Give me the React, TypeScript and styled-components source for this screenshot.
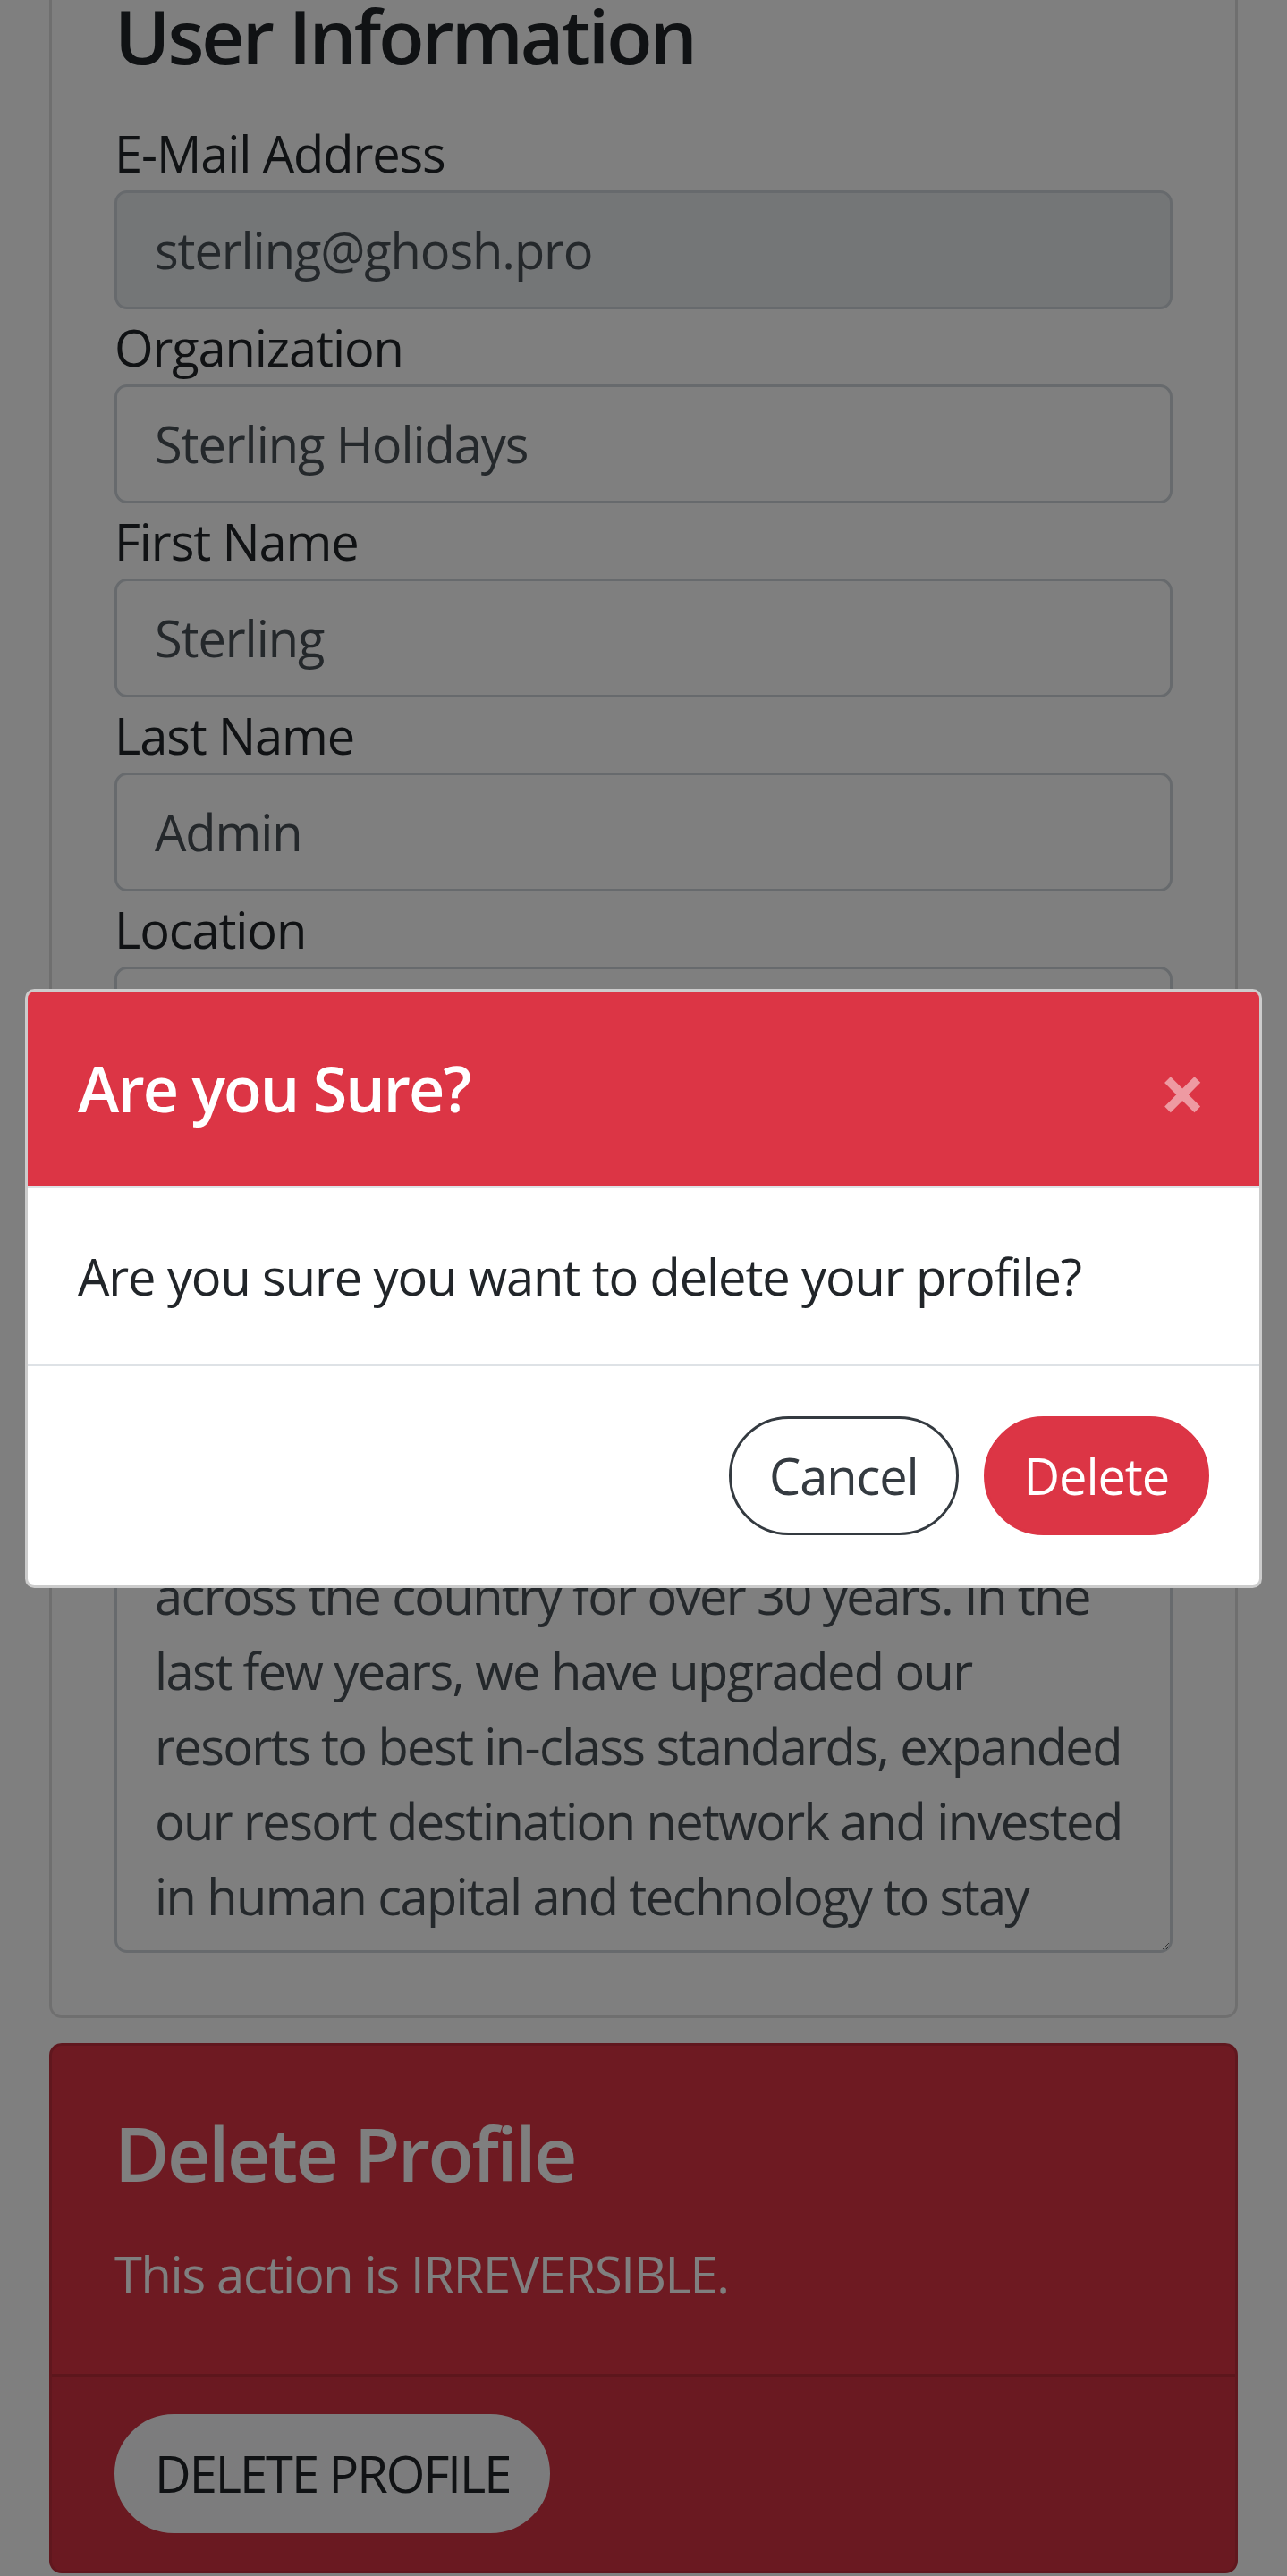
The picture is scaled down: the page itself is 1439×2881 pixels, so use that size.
import React from "react";
import styled, { createGlobalStyle } from "styled-components";

const GlobalStyle = createGlobalStyle`
  html, body {
    margin: 0;
    padding: 0;
    background: #fff;
  }
  body {
    font-family: "Open Sans", "Noto Sans", sans-serif;
    font-size: 56px;
    line-height: 84px;
    color: #212529;
    letter-spacing: -1.1px;
  }
  * {
    box-sizing: border-box;
  }
`;

const Page = styled.div`
  padding: 0 55px;
`;

const InfoCard = styled.section`
  border: 3.5px solid rgba(0, 0, 0, 0.125);
  border-top: none;
  border-radius: 0 0 14px 14px;
  padding: 0 70px 70px;
`;

const Heading = styled.h4`
  margin: -10px 0 38px;
  font-size: 84px;
  line-height: 1.2;
  font-weight: 600;
  letter-spacing: -3px;
`;

const Field = styled.div`
  display: flex;
  flex-direction: column;
`;

const Label = styled.label`
  font-size: 56px;
  line-height: 84px;
`;

const Input = styled.input<{ $disabled?: boolean }>`
  height: 133px;
  width: 100%;
  padding: 0 42px;
  border: 3.5px solid #ced4da;
  border-radius: 14px;
  font-family: inherit;
  letter-spacing: inherit;
  font-size: 56px;
  color: #495057;
  background: ${({ $disabled }) => ($disabled ? "#e9ecef" : "#fff")};
  outline: none;
`;

const TextArea = styled.textarea`
  width: 100%;
  height: 886px;
  padding: 21px 42px;
  border: 3.5px solid #ced4da;
  border-radius: 14px;
  font-family: inherit;
  letter-spacing: -1.6px;
  font-size: 56px;
  line-height: 84px;
  color: #495057;
  white-space: pre;
  overflow: hidden;
  resize: vertical;
  outline: none;
  display: block;
`;

const DangerCard = styled.section`
  margin-top: 28px;
  background: #dc3545;
  color: #fff;
  border: 3.5px solid rgba(0, 0, 0, 0.125);
  border-radius: 14px;
  overflow: hidden;
`;

const DangerBody = styled.div`
  padding: 70px;
`;

const DangerTitle = styled.h4`
  margin: 0 0 42px;
  font-size: 84px;
  line-height: 1.2;
  font-weight: 600;
  letter-spacing: -2.5px;
`;

const DangerText = styled.p`
  margin: 0;
  font-size: 56px;
  line-height: 84px;
  letter-spacing: -1.3px;
`;

const DangerFooter = styled.div`
  padding: 42px 70px;
  border-top: 3.5px solid rgba(0, 0, 0, 0.125);
  background: rgba(0, 0, 0, 0.03);
`;

const PillButton = styled.button<{ $variant: "light" | "outline" | "danger" }>`
  height: 133px;
  padding: 0 42px;
  border-radius: 400px;
  font-family: inherit;
  letter-spacing: ${({ $variant }) => ($variant === "light" ? "-2px" : "inherit")};
  font-size: 56px;
  line-height: 84px;
  cursor: pointer;
  border: 3.5px solid
    ${({ $variant }) =>
      $variant === "light" ? "#f8f9fa" : $variant === "outline" ? "#343a40" : "#dc3545"};
  background: ${({ $variant }) =>
    $variant === "light" ? "#f8f9fa" : $variant === "outline" ? "#fff" : "#dc3545"};
  color: ${({ $variant }) =>
    $variant === "light" ? "#212529" : $variant === "outline" ? "#343a40" : "#fff"};
`;

const Backdrop = styled.div`
  position: fixed;
  inset: 0;
  background: rgba(0, 0, 0, 0.5);
  z-index: 10;
`;

const ModalWrap = styled.div`
  position: fixed;
  inset: 0;
  z-index: 20;
  display: flex;
  align-items: center;
  padding: 0 28px;
`;

const ModalContent = styled.div`
  width: 100%;
  background: #fff;
  border: 3.5px solid rgba(0, 0, 0, 0.2);
  border-radius: 10.5px;
  overflow: hidden;
`;

const ModalHeader = styled.div`
  display: flex;
  align-items: center;
  justify-content: space-between;
  padding: 56px;
  background: #dc3545;
  border-bottom: 3.5px solid #dee2e6;
`;

const ModalTitle = styled.h5`
  margin: 0;
  font-size: 70px;
  line-height: 105px;
  font-weight: 600;
  letter-spacing: -1.9px;
  color: #fff;
`;

const CloseButton = styled.button`
  margin: 0 -6px 0 auto;
  padding: 8px 10px 0;
  border: none;
  background: transparent;
  font-family: inherit;
  font-size: 90px;
  font-weight: 700;
  line-height: 1;
  color: #fff;
  opacity: 0.5;
  cursor: pointer;
`;

const ModalBody = styled.div`
  padding: 56px;
  font-size: 56px;
  line-height: 84px;
  color: #212529;
`;

const ModalFooter = styled.div`
  display: flex;
  justify-content: flex-end;
  gap: 28px;
  padding: 56px;
  border-top: 3.5px solid #dee2e6;
`;

const about = [
  "Sterling Holidays Resorts Limited is a",
  "leading leisure hospitality company in India,",
  "offering holidays to families with a",
  "network of resorts in stunning locations",
  "that has been delighting holiday makers",
  "across the country for over 30 years. In the",
  "last few years, we have upgraded our",
  "resorts to best in-class standards, expanded",
  "our resort destination network and invested",
  "in human capital and technology to stay",
  "competitive.",
].join("\n");

const fields = [
  { label: "E-Mail Address", value: "sterling@ghosh.pro", disabled: true },
  { label: "Organization", value: "Sterling Holidays" },
  { label: "First Name", value: "Sterling" },
  { label: "Last Name", value: "Admin" },
  { label: "Location", value: "Chennai, India" },
];

export default function App() {
  return (
    <>
      <GlobalStyle />
      <Page>
        <InfoCard>
          <Heading>User Information</Heading>
          {fields.map((f) => (
            <Field key={f.label}>
              <Label>{f.label}</Label>
              <Input $disabled={f.disabled} disabled={f.disabled} defaultValue={f.value} />
            </Field>
          ))}
          <Field>
            <Label>About</Label>
            <TextArea defaultValue={about} />
          </Field>
        </InfoCard>
        <DangerCard>
          <DangerBody>
            <DangerTitle>Delete Profile</DangerTitle>
            <DangerText>This action is IRREVERSIBLE.</DangerText>
          </DangerBody>
          <DangerFooter>
            <PillButton $variant="light">DELETE PROFILE</PillButton>
          </DangerFooter>
        </DangerCard>
      </Page>
      <Backdrop />
      <ModalWrap>
        <ModalContent>
          <ModalHeader>
            <ModalTitle>Are you Sure?</ModalTitle>
            <CloseButton aria-label="Close">×</CloseButton>
          </ModalHeader>
          <ModalBody>Are you sure you want to delete your profile?</ModalBody>
          <ModalFooter>
            <PillButton $variant="outline">Cancel</PillButton>
            <PillButton $variant="danger">Delete</PillButton>
          </ModalFooter>
        </ModalContent>
      </ModalWrap>
    </>
  );
}
